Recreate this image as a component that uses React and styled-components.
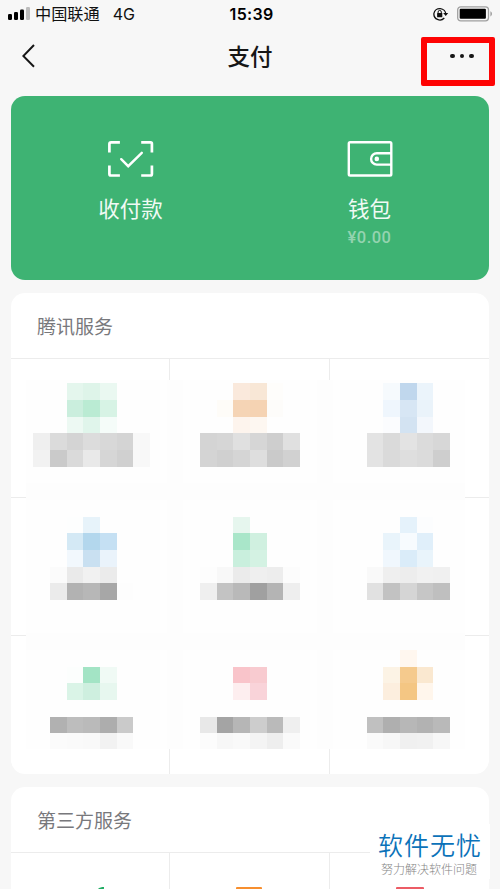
import React from "react";
import styled, { createGlobalStyle } from "styled-components";

const GlobalStyle = createGlobalStyle`
  * {
    box-sizing: border-box;
  }

  body {
    margin: 0;
    background: #f7f7f7;
    font-family: Inter, "Noto Sans CJK SC", sans-serif;
  }
`;

const Page = styled.div`
  width: 500px;
  height: 889px;
  overflow: hidden;
  position: relative;
  display: flex;
  flex-direction: column;
  color: #161616;
  background: #f7f7f7;
`;

const StatusBar = styled.div`
  height: 28px;
  flex: none;
  display: grid;
  grid-template-columns: 1fr 60px 1fr;
  align-items: center;
  padding: 0 7px 0 8px;
  font-size: 16px;
  line-height: 28px;
  color: #111;
`;

const Carrier = styled.div`
  display: flex;
  align-items: center;
  gap: 5px;
`;

const CarrierName = styled.span`
  font-family: "Noto Sans CJK SC", sans-serif;
  font-size: 16.2px;
  line-height: 26px;
  margin: 0 8px 2px 0;
`;

const Clock = styled.div`
  padding-left: 2px;
  text-align: center;
  font-weight: 600;
  font-size: 16px;
  letter-spacing: 0.3px;
  color: #000;
`;

const StatusIcons = styled.div`
  display: flex;
  justify-content: flex-end;
  align-items: center;
  gap: 8px;
`;

const NavBar = styled.div`
  height: 68px;
  flex: none;
  display: grid;
  grid-template-columns: 1fr auto 1fr;
  align-items: start;
  padding: 9px 5px 0 22px;
`;

const NavTitle = styled.h1`
  margin: -1px 17px 0 0;
  font-family: "Noto Sans CJK SC", sans-serif;
  font-size: 22.5px;
  font-weight: 500;
  line-height: 38px;
`;

const BackIcon = styled.svg`
  margin-top: 7px;
`;

const MoreButton = styled.div`
  justify-self: end;
  width: 74px;
  height: 49px;
  border: 6.5px solid #fe0303;
  border-radius: 2px;
  display: flex;
  justify-content: center;
  gap: 4.6px;
  padding: 10.6px 0 0 8px;
`;

const Dot = styled.i`
  width: 4.8px;
  height: 4.8px;
  border-radius: 50%;
  background: #161616;
`;

const WalletCard = styled.section`
  flex: none;
  height: 184px;
  margin: 0 11px;
  border-radius: 14px;
  background: #3eb373;
  display: grid;
  grid-template-columns: 1fr 1fr;
  color: #f0faf4;
`;

const WalletItem = styled.div`
  display: flex;
  flex-direction: column;
  align-items: center;
  padding-top: 44px;
`;

const WalletLabel = styled.div`
  margin-top: 14px;
  font-family: "Noto Sans CJK SC", sans-serif;
  font-size: 21.5px;
  line-height: 32px;
`;

const Balance = styled.div`
  margin-top: 2px;
  font-family: Roboto, sans-serif;
  font-size: 16.5px;
  font-weight: 500;
  line-height: 24px;
  letter-spacing: 0.5px;
  color: #94d3b0;
`;

const Card = styled.section`
  flex: none;
  height: ${({ $height }) => $height}px;
  margin: 13px 11px 0;
  border-radius: 14px;
  background: #fff;
  overflow: hidden;
`;

const CardTitle = styled.h2`
  height: 66px;
  margin: 0;
  padding-left: 26px;
  border-bottom: 1px solid #ececec;
  font-family: "Noto Sans CJK SC", sans-serif;
  font-size: 19px;
  font-weight: 400;
  line-height: 66px;
  color: #78787c;
`;

const ServiceGrid = styled.div`
  position: relative;
  display: grid;
  grid-template-columns: 159px 160px 159px;
  grid-auto-rows: 138.5px;
`;

const Tile = styled.div`
  display: flex;
  justify-content: center;
  border-right: 1px solid #ececec;
  border-bottom: 1px solid #ececec;

  &:nth-child(3n) {
    border-right: none;
  }
`;

/* covers the tiles and the lines between them */
const MosaicCover = styled.div`
  position: absolute;
  left: 15px;
  top: 21px;
  width: 439px;
  height: 369px;
  overflow: hidden;
  padding: 3.333px 7.333px;
  display: grid;
  grid-template-columns: repeat(3, 116.667px);
  grid-template-rows: 83.333px 83.333px 100px;
  gap: 50px;
  background: linear-gradient(#fdfdfd, #fdfdfd) 141px 0 / 16px 100% no-repeat,
    linear-gradient(#fdfdfd, #fdfdfd) 291px 0 / 16px 100% no-repeat,
    linear-gradient(#fdfdfd, #fdfdfd) 0 103px / 100% 17px no-repeat,
    linear-gradient(#fdfdfd, #fdfdfd) 0 253px / 100% 17px no-repeat,
    #fefefe;
`;

const Mosaic = styled.div`
  display: grid;
  grid-template-columns: repeat(7, 16.6667px);
  grid-auto-rows: 16.6667px;
`;

const Cell = styled.i`
  background: ${({ $color }) => $color};
`;

const PartnerIcon = styled.svg`
  margin-top: 32px;
`;

const Watermark = styled.div`
  position: absolute;
  left: 370px;
  top: 824px;
  width: 120px;
  height: 55px;
  background: #fff;
  font-family: "Noto Sans CJK SC", sans-serif;
  text-align: center;
  white-space: nowrap;
`;

const WatermarkName = styled.div`
  height: 38px;
  font-size: 25px;
  font-weight: 350;
  line-height: 36px;
  padding-top: 2px;
  letter-spacing: 1px;
  color: #0b72b9;
`;

const WatermarkSlogan = styled.div`
  font-size: 12px;
  font-weight: 300;
  line-height: 14px;
  padding-right: 2px;
  color: #858585;
`;

const _ = "transparent";

const mosaics = [
  [
    [_, _, "#e4f6ed", "#def4e9", "#eaf8f1", _, _],
    [_, _, "#caeedd", "#baebd3", "#d7f3e5", _, _],
    [_, _, "#edf9f3", "#e0f5eb", "#f5fcf9", _, _],
    ["#efefef", "#dbdbdb", "#d4d4d4", "#dcdcdc", "#d8d8d8", "#d4d4d4", "#f8f8f8"],
    ["#f2f2f2", "#cacaca", "#dadada", "#e9e9e9", "#d6d6d6", "#d0d0d0", "#f8f8f8"],
  ],
  [
    [_, _, "#fae9dc", "#f8e7d6", "#fefdfb", _, _],
    [_, "#fefcf8", "#f5d4b5", "#f5d3b3", "#fdfcfa", _, _],
    [_, _, "#fdf4ed", "#fdf7f1", _, _, _],
    ["#d4d4d4", "#d6d6d6", "#e0e0e0", "#d6d6d6", "#cecece", "#e0e0e0", _],
    ["#d4d4d4", "#d0d0d0", "#d5d5d5", "#dedede", "#cacaca", "#d1d1d1", _],
  ],
  [
    [_, "#f6fafd", "#c0d7ed", "#ebf4fb", _, _, _],
    [_, "#eff6fd", "#d7e6f4", "#eaf3fa", _, _, _],
    [_, "#fbfcfe", "#d3e3f2", "#f3f7fc", _, _, _],
    ["#e3e3e3", "#dadada", "#e3e3e3", "#dbdbdb", "#d7d7d7", _, _],
    ["#e3e3e3", "#dadada", "#dedede", "#dbdbdb", "#cecece", _, _],
  ],
  [
    [_, _, "#fdfefe", "#e7f3fa", _, _, _],
    [_, _, "#d4e9f5", "#b3d7ed", "#c5e0f3", _, _],
    [_, _, "#f2f8fd", "#c9e0f1", "#eaf3fb", _, _],
    [_, "#fbfbfb", "#eaeaea", "#f1f1f1", "#ebebeb", _, _],
    [_, "#ebebeb", "#b2b2b2", "#b7b7b7", "#a7a7a7", "#fdfdfd", _],
  ],
  [
    [_, _, "#e6f6ee", _, _, _, _],
    [_, _, "#a9e6c9", "#d0f0e0", _, _, _],
    [_, _, "#c9efdd", "#d4f2e3", _, _, _],
    ["#fdfdfd", "#f8f8f8", "#ebebeb", "#efefef", "#ededed", "#fcfcfc", _],
    ["#efefef", "#c3c3c3", "#b9b9b9", "#a0a0a0", "#b4b4b4", "#eeeeee", _],
  ],
  [
    [_, _, "#e5f2fb", "#fcfdfe", _, _, _],
    [_, "#e9f4fb", "#f7fbfe", "#e0effa", _, _, _],
    [_, "#f0f7fd", "#daecf9", "#e9f4fb", _, _, _],
    ["#f9f9f9", "#efefef", "#ededed", "#f1f1f1", "#f0f0f0", _, _],
    ["#e1e1e1", "#c2c2c2", "#d5d5d5", "#c6c6c6", "#bfbfbf", _, _],
  ],
  [
    [_, _, _, _, _, _, _],
    [_, _, "#fcfefd", "#a3e4c5", "#f0faf5", _, _],
    [_, _, "#daf4e7", "#ceefdf", "#e7f7ef", _, _],
    [_, _, _, _, _, _, _],
    [_, "#b1b1b1", "#bdbdbd", "#bababa", "#adadad", "#cacaca", _],
    [_, "#fbfbfb", "#fafafa", "#f9f9f9", "#f2f2f2", "#f9f9f9", _],
  ],
  [
    [_, _, _, _, _, _, _],
    [_, _, "#f9c4ca", "#f8cbd0", _, _, _],
    [_, _, "#fdeeef", "#f9d3d9", _, _, _],
    [_, _, _, _, _, _, _],
    ["#e8e8e8", "#a4a4a4", "#b6b6b6", "#cdcdcd", "#bababa", "#efefef", _],
    ["#fcfcfc", "#f7f7f7", "#f9f9f9", "#f4f4f4", "#eeeeee", "#fafafa", _],
  ],
  [
    [_, _, "#fff7ef", _, _, _, _],
    [_, "#fcf3e5", "#f5ca8d", "#fae8d0", _, _, _],
    [_, "#fceede", "#f4c683", "#fff6ec", _, _, _],
    [_, _, _, _, _, _, _],
    ["#c0c0c0", "#afafaf", "#b7b7b7", "#b2b2b2", "#b9b9b9", _, _],
    ["#fafafa", "#f7f7f7", "#f0f0f0", "#f1f1f1", "#f7f7f7", _, _],
  ],
];

const SignalIcon = () => (
  <svg width="22" height="14" viewBox="0 0 22 14">
    <rect x="0" y="7" width="4" height="6" rx="1.2" fill="#000" />
    <rect x="6" y="5" width="4" height="8" rx="1.2" fill="#000" />
    <rect x="12" y="2.5" width="4" height="10.5" rx="1.2" fill="#000" />
    <rect x="18" y="0" width="4" height="13" rx="1.2" fill="#bcbcbc" />
  </svg>
);

const RotationLockIcon = () => (
  <svg width="16" height="14" viewBox="0 0 16 14" fill="none">
    <path
      d="M12.8 7.5A6 6 0 0 0 0.9 6.5A6 6 0 0 0 11.3 11"
      stroke="#111"
      strokeWidth="1.3"
    />
    <path d="M10.2 6H15.2L12.7 9Z" fill="#111" />
    <rect x="4.1" y="6.1" width="5.2" height="4.1" rx="0.5" fill="#111" />
    <path d="M5.1 6.5V5a1.6 1.6 0 0 1 3.2 0v1.5" stroke="#111" strokeWidth="1" />
  </svg>
);

const BatteryIcon = () => (
  <svg width="36" height="16" viewBox="0 0 36 16" fill="none">
    <rect x="0.7" y="0.8" width="30.8" height="14" rx="3" stroke="#a0a0a0" strokeWidth="1.3" />
    <rect x="2.7" y="2.8" width="26.2" height="10" rx="1" fill="#000" />
    <path d="M33.4 5.2C35.5 6.2 35.5 9.4 33.4 10.4Z" fill="#a0a0a0" />
  </svg>
);

const ScanPayIcon = () => (
  <svg width="46" height="38" viewBox="0.8 0 46 38" fill="none" stroke="#fff" strokeWidth="2.7">
    <path d="M2.2 12.5V4Q2.2 2.3 3.9 2.3H12.7M34 2.3H43.4Q44.7 2.3 44.7 3.8V12.5M44.7 25.5V34Q44.7 35.5 43.2 35.5H34M12.7 35.5H3.9Q2.2 35.5 2.2 34V25.5" />
    <path d="M14 19.2L21 26.2L34.6 12.8" strokeLinecap="round" strokeWidth="2.4" />
  </svg>
);

const WalletIcon = () => (
  <svg width="46" height="38" viewBox="0 0 46 38" fill="none" stroke="#fff" strokeWidth="2.4">
    <rect x="1.8" y="2.3" width="42.5" height="33.2" rx="1.3" />
    <path d="M44.3 13.2H29.8a5.7 5.7 0 0 0 0 11.4H44.3" />
    <circle cx="29.8" cy="18.9" r="2.3" fill="#fff" stroke="none" />
  </svg>
);

const App = () => {
  return (
    <>
      <GlobalStyle />
      <Page lang="zh-CN">
        <StatusBar>
          <Carrier>
            <SignalIcon />
            <CarrierName>中国联通</CarrierName>
            <span>4G</span>
          </Carrier>
          <Clock>15:39</Clock>
          <StatusIcons>
            <RotationLockIcon />
            <BatteryIcon />
          </StatusIcons>
        </StatusBar>

        <NavBar>
          <BackIcon width="13" height="24" viewBox="0 0 13 24" fill="none">
            <path d="M12 1L1.3 12L12 22.8" stroke="#161616" strokeWidth="2" />
          </BackIcon>
          <NavTitle>支付</NavTitle>
          <MoreButton>
            <Dot />
            <Dot />
            <Dot />
          </MoreButton>
        </NavBar>

        <WalletCard>
          <WalletItem>
            <ScanPayIcon />
            <WalletLabel>收付款</WalletLabel>
          </WalletItem>
          <WalletItem>
            <WalletIcon />
            <WalletLabel>钱包</WalletLabel>
            <Balance>¥0.00</Balance>
          </WalletItem>
        </WalletCard>

        <Card $height={481}>
          <CardTitle>腾讯服务</CardTitle>
          <ServiceGrid>
            {mosaics.map((_rows, index) => (
              <Tile key={index} />
            ))}
            <MosaicCover>
              {mosaics.map((rows, index) => (
                <Mosaic key={index}>
                  {rows.flat().map((color, i) => (
                    <Cell key={i} $color={color} />
                  ))}
                </Mosaic>
              ))}
            </MosaicCover>
          </ServiceGrid>
        </Card>

        <Card $height={240}>
          <CardTitle>第三方服务</CardTitle>
          <ServiceGrid>
            <Tile>
              <PartnerIcon width="40" height="36" viewBox="0 0 40 36">
                <path d="M34 2C31 2 28.5 3 27 5V14L32 10Q34 6 34 2Z" fill="#20ac63" />
              </PartnerIcon>
            </Tile>
            <Tile>
              <PartnerIcon width="28" height="36" viewBox="0 0 28 36">
                <rect x="0" y="2" width="26" height="34" rx="1" fill="#f78f2f" />
              </PartnerIcon>
            </Tile>
            <Tile>
              <PartnerIcon width="28" height="36" viewBox="0 0 28 36">
                <rect x="0" y="2" width="28" height="34" rx="1" fill="#ec5c65" />
              </PartnerIcon>
            </Tile>
          </ServiceGrid>
        </Card>

        <Watermark>
          <WatermarkName>软件无忧</WatermarkName>
          <WatermarkSlogan>努力解决软件问题</WatermarkSlogan>
        </Watermark>
      </Page>
    </>
  );
};

export default App;
